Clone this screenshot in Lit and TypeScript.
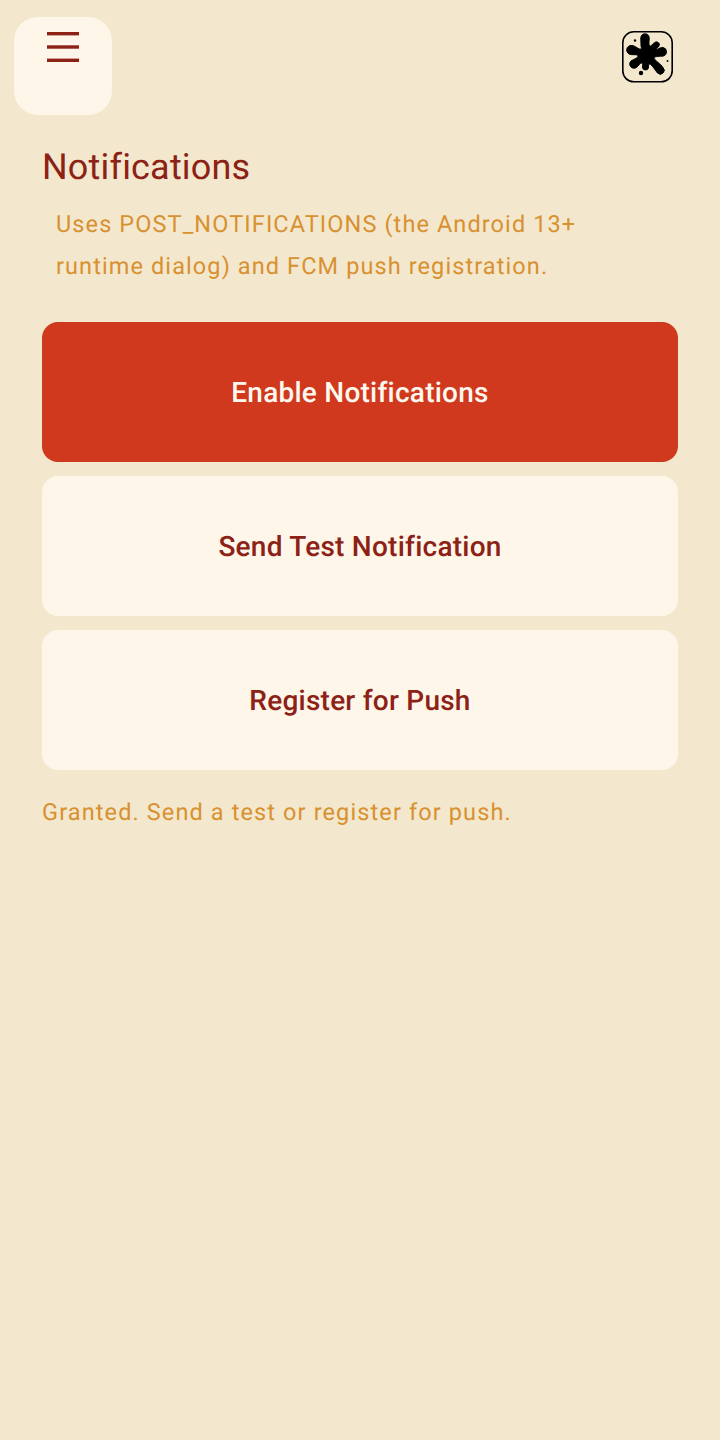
import { LitElement, html, css } from 'lit';
import { customElement } from 'lit/decorators.js';

@customElement('app-root')
export class AppRoot extends LitElement {
  static styles = css`
    :host {
      display: block;
      min-height: 1440px;
      box-sizing: border-box;
      background: #f3e7cd;
      font-family: Roboto, sans-serif;
      text-rendering: geometricPrecision;
    }
    .top {
      display: flex;
      justify-content: space-between;
      align-items: flex-start;
      padding: 17px 42px 0 14px;
    }
    .menu {
      width: 98px;
      height: 98px;
      box-sizing: border-box;
      border-radius: 24px;
      background: #fdf6e9;
      display: flex;
      justify-content: center;
      padding-top: 14px;
    }
    .bars {
      width: 32px;
      height: 31px;
      display: block;
    }
    .logo {
      width: 52px;
      height: 54px;
      margin-top: 13px;
      margin-right: 5px;
      display: block;
    }
    .content {
      padding: 30px 42px 0;
      display: flex;
      flex-direction: column;
    }
    h1 {
      margin: 0;
      font-size: 36px;
      line-height: 44px;
      font-weight: 400;
      letter-spacing: 0.18px;
      color: #8c2116;
    }
    .desc {
      margin: 14px 0 0;
      padding: 0 14px;
      font-size: 23.5px;
      line-height: 42px;
      letter-spacing: 1.1px;
      color: #d8912f;
    }
    .actions {
      margin-top: 35px;
      display: flex;
      flex-direction: column;
      gap: 14px;
    }
    .btn {
      height: 140px;
      border: 0;
      border-radius: 16px;
      padding: 0;
      font: 500 28px Roboto, sans-serif;
      letter-spacing: 0.24px;
      text-rendering: geometricPrecision;
      background: #fdf6e9;
      color: #8c2116;
    }
    .btn.primary {
      background: #d0391e;
      color: #fff8ee;
    }
    .status {
      margin: 28px 0 0;
      font-size: 23.5px;
      line-height: 28px;
      letter-spacing: 1.12px;
      color: #d8912f;
    }
  `;

  render() {
    return html`
      <div class="top">
        <div class="menu">
          <svg class="bars" viewBox="0 0 32 31">
            <rect y="1" width="32" height="3.4" fill="#8c2116" />
            <rect y="14.3" width="32" height="3.4" fill="#8c2116" />
            <rect y="27.6" width="32" height="3.4" fill="#8c2116" />
          </svg>
        </div>
        <svg class="logo" viewBox="11 10 52 54">
          <rect x="12.8" y="11.8" width="49.4" height="50" rx="11" fill="none" stroke="#000" stroke-width="1.6" />
          <path
            fill="#000"
            stroke="#000"
            stroke-width="1"
            stroke-linejoin="round"
            d="M31 26C31 23 30.8 21 30.8 18A4.2 4.2 0 0 1 39.2 18C39.2 21 38.5 24 39.5 26C41 27 43 23 44.3 23A2.8 2.8 0 0 1 49 26C48 28 46 28 46 29.5C47 30 49 27.5 53 27.5A4.4 4.4 0 0 1 53.5 36C50 36.5 45 36 44 38C44 40 51 44 53 47.5A3.7 3.7 0 0 1 47.5 53C45 50 41.5 44 39.5 44C38.5 44 38.5 46 38.5 47A3 3 0 0 1 32.5 47C32.5 45 33 43 31.5 43C30 43 28.5 46 27 47A4 4 0 0 1 21 41C24 39 28 38 28 36C28 34 23 35 20.5 34.5A4.5 4.5 0 0 1 22 25.5C25 25.5 29 30 31 29C32 28 31 27 31 26Z"
          />
          <circle cx="25" cy="20.5" r="1.2" />
          <circle cx="57.5" cy="41" r="0.9" />
          <circle cx="31" cy="53" r="2.2" />
        </svg>
      </div>
      <div class="content">
        <h1>Notifications</h1>
        <p class="desc">Uses POST_NOTIFICATIONS (the Android 13+ runtime dialog) and FCM push registration.</p>
        <div class="actions">
          <button class="btn primary">Enable Notifications</button>
          <button class="btn">Send Test Notification</button>
          <button class="btn">Register for Push</button>
        </div>
        <p class="status">Granted. Send a test or register for push.</p>
      </div>
    `;
  }
}
